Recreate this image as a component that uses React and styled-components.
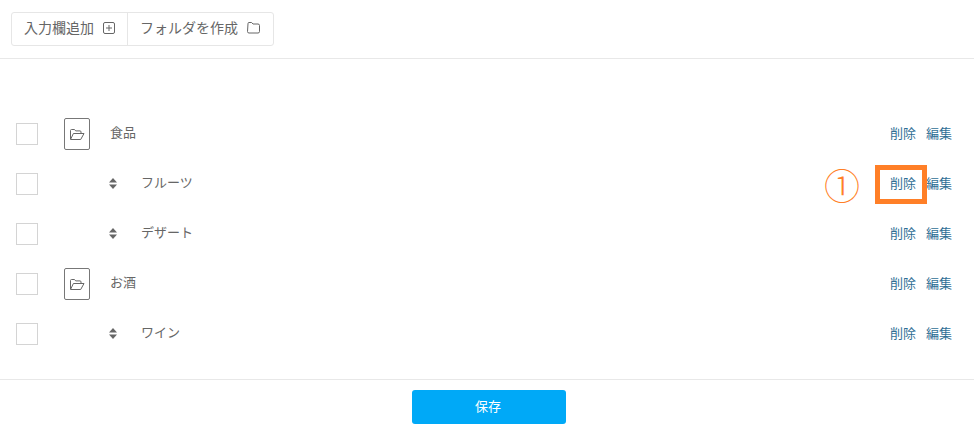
import styled, { createGlobalStyle } from "styled-components";

const GlobalStyle = createGlobalStyle`
    html, body {
        margin: 0;
        padding: 0;
        background: #fff;
    }
    body {
        font-family: "Noto Sans CJK JP", "Liberation Sans", sans-serif;
        color: #666;
    }
`;
const Page = styled.div`
    width: 974px;
    height: 442px;
    overflow: hidden;
    display: flex;
    flex-direction: column;
`;
const Header = styled.div`
    height: 59px;
    box-sizing: border-box;
    padding: 12px 0 0 11px;
    border-bottom: 1px solid #e8e8e8;
`;
const ButtonGroup = styled.div`
    display: inline-flex;
    height: 34px;
    box-sizing: border-box;
    border: 1px solid #e6e6e6;
    border-radius: 3px;
`;
const GroupButton = styled.div`
    display: flex;
    align-items: center;
    gap: 9px;
    padding: 0 12px 2px;
    font-size: 14px;
    color: #666;
    & + & {
        border-left: 1px solid #e6e6e6;
    }
`;
const GroupLabel = styled.span`
    margin-bottom: 2px;
`;
const List = styled.div`
    padding: 50px 0 0 16px;
    height: 320px;
    box-sizing: border-box;
`;
const Row = styled.div`
    display: flex;
    align-items: center;
    height: 50px;
    padding-right: 22px;
`;
const Checkbox = styled.span`
    width: 22px;
    height: 22px;
    box-sizing: border-box;
    border: 1px solid #d4d4d4;
    flex: none;
`;
const FolderButton = styled.span`
    width: 26px;
    height: 32px;
    box-sizing: border-box;
    margin-left: 26px;
    border: 1px solid #777;
    border-radius: 2px;
    display: flex;
    align-items: center;
    justify-content: center;
    flex: none;
`;
const SortHandle = styled.span`
    margin-left: 71px;
    margin-bottom: 2px;
    width: 8px;
    display: flex;
    flex: none;
`;
const Name = styled.span`
    font-size: 13px;
    color: #666;
    margin-bottom: 5px;
    margin-left: ${props => (props.$child ? "24px" : "20px")};
`;
const Actions = styled.div`
    margin-left: auto;
    margin-bottom: 2px;
    display: flex;
    gap: 10px;
`;
const ActionWrap = styled.span`
    position: relative;
    display: flex;
`;
const ActionLink = styled.a`
    font-size: 13px;
    line-height: 18px;
    color: #2f6f96;
    cursor: pointer;
`;
const Highlight = styled.span`
    position: absolute;
    left: -15px;
    top: -9px;
    width: 52px;
    height: 39px;
    box-sizing: border-box;
    border: 5px solid #ff7f27;
`;
const Marker = styled.span`
    position: absolute;
    left: -66px;
    top: -8px;
    font-size: 36px;
    line-height: 36px;
    font-weight: 300;
    color: #ff7f27;
`;
const Footer = styled.div`
    border-top: 1px solid #e8e8e8;
    padding: 10px 0 0 4px;
    display: flex;
    justify-content: center;
`;
const SaveButton = styled.button`
    width: 154px;
    height: 34px;
    border: 0;
    border-radius: 3px;
    background: #00a9f7;
    color: #fff;
    font-family: inherit;
    font-size: 13px;
    padding: 0 2px 4px 0;
`;

function PlusBoxIcon() {
    return (
        <svg width="12" height="12" viewBox="0 0 12 12" fill="none" stroke="#666" strokeWidth="1">
            <rect x="0.5" y="0.5" width="11" height="11" rx="1.5" />
            <path d="M6 3v6M3 6h6" />
        </svg>
    );
}

function FolderIcon() {
    return (
        <svg width="14" height="12" viewBox="0 0 14 12" fill="none" stroke="#666" strokeWidth="1">
            <path d="M1 1.5a1 1 0 0 1 1-1h2.6l1.4 1.5h5a1.5 1.5 0 0 1 1.5 1.5v6a1.5 1.5 0 0 1-1.5 1.5h-9a1.5 1.5 0 0 1-1.5-1.5z" />
        </svg>
    );
}

function FolderOpenIcon() {
    return (
        <svg width="15" height="11" viewBox="0 0 15 11" fill="none" stroke="#666" strokeWidth="1">
            <path d="M0.5 10V1.5a1 1 0 0 1 1-1h3l1.2 1.4h4.3a1 1 0 0 1 1 1v1.5" />
            <path d="M0.5 10.5h10.2l3.3-6H3.4z" />
        </svg>
    );
}

function SortIcon() {
    return (
        <svg width="8" height="11" viewBox="0 0 8 11" fill="#666">
            <path d="M4 0l4 4.6H0z" />
            <path d="M4 11L0 6.4h8z" />
        </svg>
    );
}

const rows = [
    { name: "食品", folder: true },
    { name: "フルーツ", marked: true },
    { name: "デザート" },
    { name: "お酒", folder: true },
    { name: "ワイン" },
];

export default function App() {
    return (
        <Page>
            <GlobalStyle />
            <Header>
                <ButtonGroup>
                    <GroupButton><GroupLabel>入力欄追加</GroupLabel> <PlusBoxIcon /></GroupButton>
                    <GroupButton><GroupLabel>フォルダを作成</GroupLabel> <FolderIcon /></GroupButton>
                </ButtonGroup>
            </Header>
            <List>
                {rows.map(row => (
                    <Row key={row.name}>
                        <Checkbox />
                        {row.folder ? (
                            <FolderButton><FolderOpenIcon /></FolderButton>
                        ) : (
                            <SortHandle><SortIcon /></SortHandle>
                        )}
                        <Name $child={!row.folder}>{row.name}</Name>
                        <Actions>
                            <ActionWrap>
                                <ActionLink>削除</ActionLink>
                                {row.marked && <Highlight />}
                                {row.marked && <Marker>①</Marker>}
                            </ActionWrap>
                            <ActionLink>編集</ActionLink>
                        </Actions>
                    </Row>
                ))}
            </List>
            <Footer>
                <SaveButton>保存</SaveButton>
            </Footer>
        </Page>
    );
}
